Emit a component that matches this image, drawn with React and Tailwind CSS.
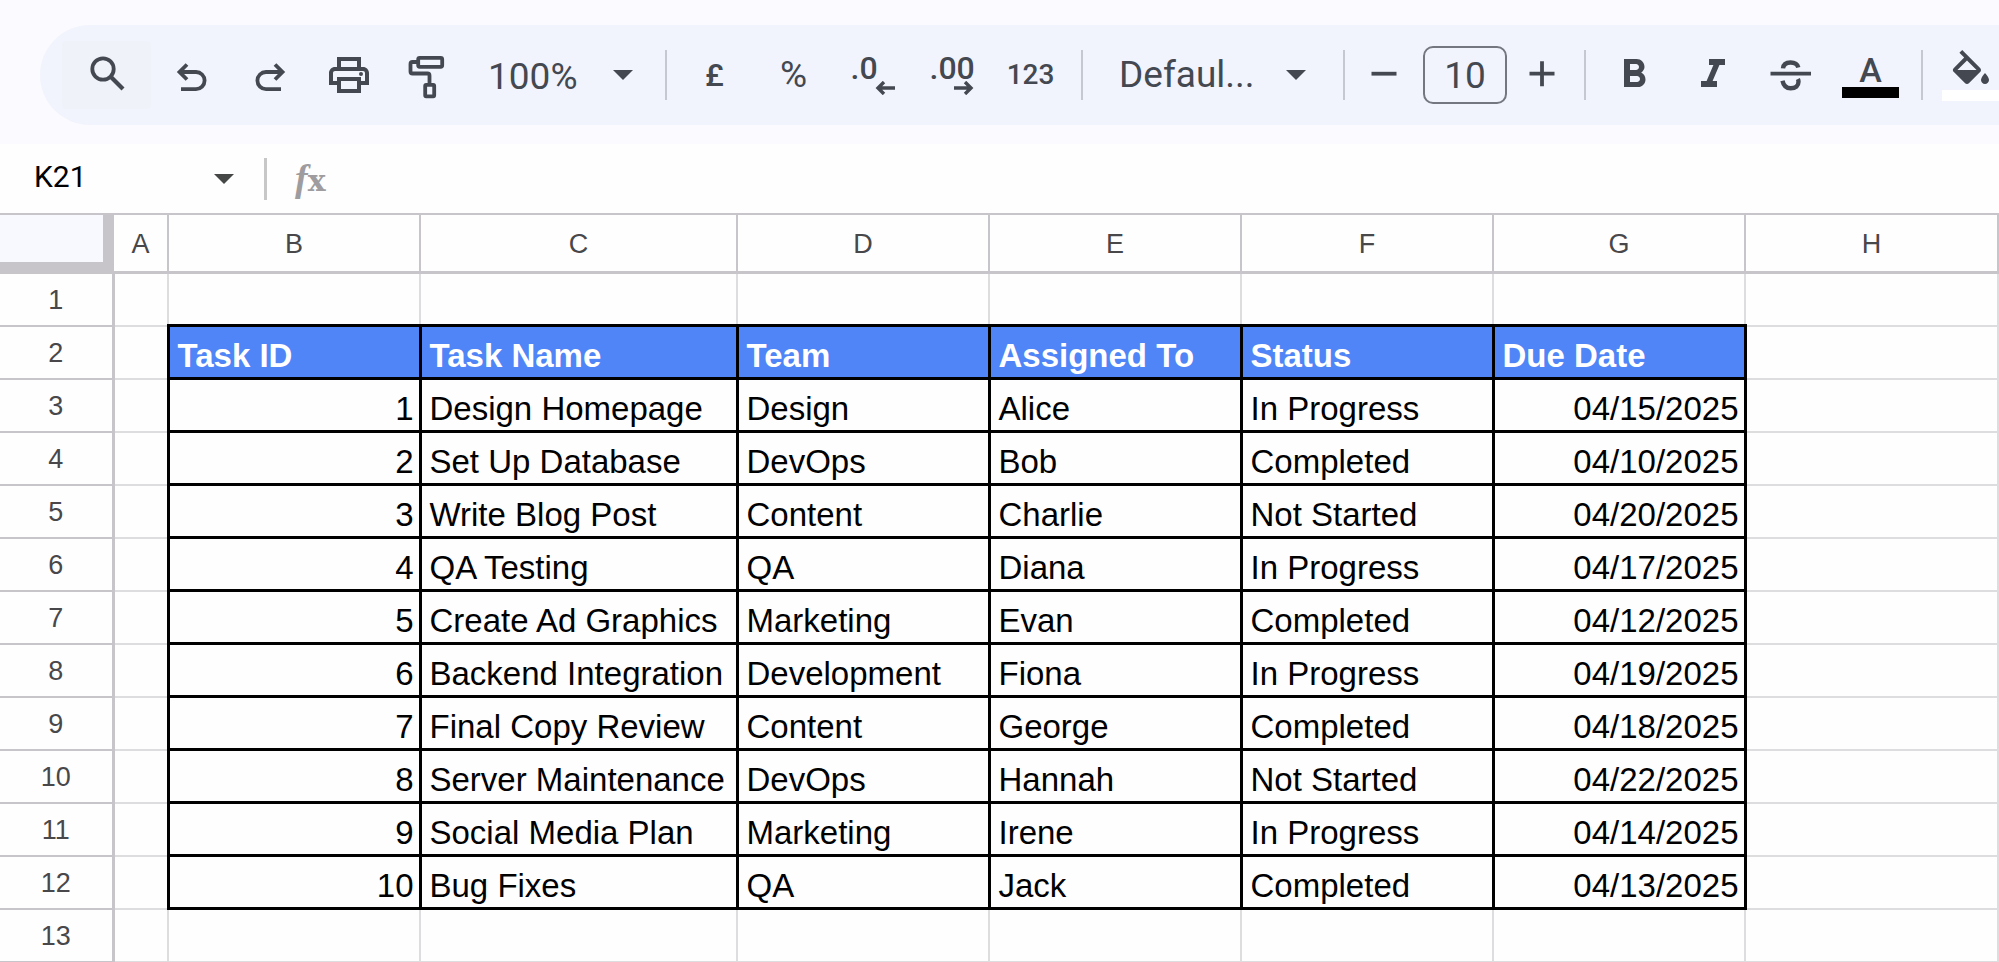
import { MdFormatBold, MdFormatColorFill, MdFormatItalic, MdOutlinePrint } from 'react-icons/md';

const columns = ['A', 'B', 'C', 'D', 'E', 'F', 'G', 'H'];

const headers = ['Task ID', 'Task Name', 'Team', 'Assigned To', 'Status', 'Due Date'];

const tasks = [
  [1, 'Design Homepage', 'Design', 'Alice', 'In Progress', '04/15/2025'],
  [2, 'Set Up Database', 'DevOps', 'Bob', 'Completed', '04/10/2025'],
  [3, 'Write Blog Post', 'Content', 'Charlie', 'Not Started', '04/20/2025'],
  [4, 'QA Testing', 'QA', 'Diana', 'In Progress', '04/17/2025'],
  [5, 'Create Ad Graphics', 'Marketing', 'Evan', 'Completed', '04/12/2025'],
  [6, 'Backend Integration', 'Development', 'Fiona', 'In Progress', '04/19/2025'],
  [7, 'Final Copy Review', 'Content', 'George', 'Completed', '04/18/2025'],
  [8, 'Server Maintenance', 'DevOps', 'Hannah', 'Not Started', '04/22/2025'],
  [9, 'Social Media Plan', 'Marketing', 'Irene', 'In Progress', '04/14/2025'],
  [10, 'Bug Fixes', 'QA', 'Jack', 'Completed', '04/13/2025'],
];

// sheet rows 1 to 13, the data starts in B2
const rows = [[], headers, ...tasks, []];

const Icon = ({ children }) => (
  <svg viewBox="0 0 48 48" className="size-12" fill="none" stroke="currentColor" strokeWidth="3.8" aria-hidden="true">
    {children}
  </svg>
);

const SearchIcon = () => (
  <Icon>
    <circle cx="20" cy="18" r="10.7" />
    <path d="M27.5 25.5 40 38" strokeWidth="4.2" />
  </Icon>
);

const UndoIcon = () => (
  <Icon>
    <path d="M20 13.5 12.5 21 20 28.5" />
    <path d="M12.5 21H29a8.6 8.6 0 0 1 0 17.2H14" />
  </Icon>
);

const RedoIcon = () => (
  <Icon>
    <path d="M29 13.5 36.5 21 29 28.5" />
    <path d="M36.5 21H20a8.6 8.6 0 0 0 0 17.2H35" />
  </Icon>
);

const PaintFormatIcon = () => (
  <Icon>
    <rect x="14.2" y="6.8" width="24" height="9" rx="1.5" />
    <path d="M14 11H8.5a2 2 0 0 0-2 2v7.5a2 2 0 0 0 2 2h15a2 2 0 0 1 2 2V33" />
    <rect x="21.2" y="33.8" width="9" height="11.5" rx="1" />
  </Icon>
);

const StrikethroughIcon = () => (
  <Icon>
    <path d="M2.5 22.7H43" />
    <path d="M15 17.4c.4-4 3.4-5.9 7.5-5.9s7 1.8 7.8 5" strokeWidth="4.4" />
    <path d="M14.5 29.8c1 4.9 4 7.5 8.2 7.5 5 0 7.8-2.6 7.8-6.6 0-1-.2-1.9-.6-2.7" strokeWidth="4.4" />
  </Icon>
);

const MinusIcon = () => (
  <Icon>
    <path d="M11.5 22.7h25" />
  </Icon>
);

const PlusIcon = () => (
  <Icon>
    <path d="M11.5 22.7h25M24 10.2v25" />
  </Icon>
);

const Arrow = ({ d }) => (
  <svg viewBox="0 0 20 14" className="h-[14px] w-5" fill="none" stroke="currentColor" strokeWidth="3.4" aria-hidden="true">
    <path d={d} />
  </svg>
);

const Caret = ({ className = '' }) => (
  <svg viewBox="0 0 20 10" className={`h-[10px] w-5 ${className}`} fill="currentColor" aria-hidden="true">
    <path d="M0 0h20L10 10z" />
  </svg>
);

const ToolButton = ({ label, children }) => (
  <button type="button" aria-label={label} className="flex h-[68px] w-[79px] shrink-0 items-center justify-center">
    {children}
  </button>
);

const Divider = () => <div className="mr-2 ml-[11px] h-[50px] w-[2px] shrink-0 bg-[#c5c8d0]" />;

const Toolbar = () => (
  <div className="overflow-hidden bg-[#fbfaff] pt-[25px] pb-[19px] pl-10">
    <div className="flex h-[100px] items-center rounded-l-full bg-[#f1f4fd] pl-[22px] font-[Roboto,sans-serif] text-[#444850]">
      <button
        type="button"
        aria-label="Search the menus"
        className="flex h-[68px] w-[89px] shrink-0 items-center justify-center rounded bg-[#eff2f9]"
      >
        <SearchIcon />
      </button>
      <ToolButton label="Undo"><UndoIcon /></ToolButton>
      <ToolButton label="Redo"><RedoIcon /></ToolButton>
      <ToolButton label="Print"><MdOutlinePrint className="size-12" /></ToolButton>
      <ToolButton label="Paint format"><PaintFormatIcon /></ToolButton>

      <div className="relative flex w-[187px] shrink-0 items-center">
        <select aria-label="Zoom" className="w-full appearance-none bg-transparent pt-[3px] pl-[21px] text-[37px]">
          <option>100%</option>
        </select>
        <Caret className="pointer-events-none absolute right-[21px]" />
      </div>
      <Divider />

      <ToolButton label="Format as currency"><span className="text-[32px] leading-9 font-medium">£</span></ToolButton>
      <ToolButton label="Format as percent"><span className="text-[37px] leading-9">%</span></ToolButton>
      <ToolButton label="Decrease decimal places">
        <span className="flex w-[44px] flex-col">
          <span className="text-left text-[32px] leading-[26px] font-medium">.0</span>
          <span className="flex justify-end"><Arrow d="M9 1 3 7l6 6M3 7h17" /></span>
        </span>
      </ToolButton>
      <ToolButton label="Increase decimal places">
        <span className="flex w-[44px] flex-col">
          <span className="text-left text-[32px] leading-[26px] font-medium">.00</span>
          <span className="flex justify-end"><Arrow d="M11 1l6 6-6 6M17 7H0" /></span>
        </span>
      </ToolButton>
      <ToolButton label="More formats"><span className="text-[28px] leading-9 font-medium">123</span></ToolButton>
      <Divider />

      <div className="relative flex w-[241px] shrink-0 items-center">
        <select aria-label="Font" className="w-full appearance-none bg-transparent pl-7 text-[37px]">
          <option>Defaul...</option>
        </select>
        <Caret className="pointer-events-none absolute right-[26px]" />
      </div>
      <Divider />

      <button type="button" aria-label="Decrease font size" className="flex h-[68px] w-[62px] shrink-0 items-center justify-center">
        <MinusIcon />
      </button>
      <input
        aria-label="Font size"
        defaultValue="10"
        className="mr-1 ml-2 h-[58px] w-[84px] shrink-0 rounded-[10px] border-2 border-[#74777f] bg-transparent text-center text-[37px]"
      />
      <button type="button" aria-label="Increase font size" className="flex h-[68px] w-[62px] shrink-0 items-center justify-center">
        <PlusIcon />
      </button>
      <Divider />

      <ToolButton label="Bold"><MdFormatBold className="size-12" /></ToolButton>
      <ToolButton label="Italic"><MdFormatItalic className="size-12" /></ToolButton>
      <ToolButton label="Strikethrough"><StrikethroughIcon /></ToolButton>
      <ToolButton label="Text color">
        <span className="flex flex-col items-center">
          <span className="text-[34px] leading-[34px] font-medium">A</span>
          <span className="h-[11px] w-[57px] bg-black" />
        </span>
      </ToolButton>
      <Divider />
      <ToolButton label="Fill color">
        <span className="flex flex-col items-center">
          <MdFormatColorFill className="-mb-2 size-12" />
          <span className="h-[11px] w-[57px] bg-white" />
        </span>
      </ToolButton>
    </div>
  </div>
);

const FormulaBar = () => (
  <div className="flex h-[71px] items-center border-b-2 border-[#c7c5c9] font-[Roboto,sans-serif]">
    <input aria-label="Name box" defaultValue="K21" className="w-[214px] shrink-0 bg-transparent pb-1 pl-[34px] text-3xl text-black" />
    <button type="button" aria-label="Named ranges" className="w-[50px] shrink-0 text-[#444746]">
      <Caret />
    </button>
    <div className="h-[42px] w-[3px] shrink-0 bg-[#c7c7c7]" />
    <label htmlFor="formula" className="flex items-baseline pl-7 leading-none text-[#9e9c9e]">
      <span className="font-['Liberation_Serif',serif] text-[38px] font-bold italic">f</span>
      <span className="font-['DejaVu_Serif',serif] text-3xl font-bold">x</span>
    </label>
    <input id="formula" className="ml-4 min-w-0 flex-1 bg-transparent text-3xl outline-none" />
  </div>
);

const Cell = ({ row, col, value }) => {
  const inTable = row >= 2 && row <= 12 && col >= 1 && col <= 6;
  // shared edges belong to the cell on their left or above
  const darkRight = row >= 2 && row <= 12 && col <= 6;
  const darkBottom = inTable || (row === 1 && col >= 1 && col <= 6);
  const isHeader = row === 2 && inTable;
  const alignRight = !isHeader && (col === 1 || col === 6);

  return (
    <td
      className={`overflow-hidden pr-[5px] pb-px pl-2 align-bottom text-[33px] leading-10 whitespace-nowrap ${
        darkRight ? 'border-r-3 border-r-black' : 'border-r-2 border-r-[#dddcde]'
      } ${darkBottom ? 'border-b-3 border-b-black' : 'border-b-2 border-b-[#dddcde]'} ${
        isHeader ? 'bg-[#4f85f6] font-bold text-white' : 'text-black'
      } ${alignRight ? 'text-right' : 'text-left'}`}
    >
      {value}
    </td>
  );
};

const Sheet = () => (
  <table className="w-full table-fixed border-collapse font-['Liberation_Sans',Arial,sans-serif]">
    <colgroup>
      <col className="w-[113px]" />
      <col className="w-[55px]" />
      <col className="w-[252px]" />
      <col className="w-[317px]" />
      <col className="w-[252px]" />
      <col className="w-[252px]" />
      <col className="w-[252px]" />
      <col className="w-[252px]" />
      <col />
    </colgroup>
    <thead>
      <tr className="h-[57px]">
        <td className="border-r-2 border-b-3 border-[#c7c5c9] p-0">
          <div className="h-[56px] border-r-[9px] border-b-[9px] border-[#c7c5c9] bg-[#f8f8ff]" />
        </td>
        {columns.map((name) => (
          <th key={name} scope="col" className="border-r-2 border-b-3 border-[#c7c5c9] p-0 pt-[2px] text-[27px] leading-8 font-normal text-[#48474a]">
            {name}
          </th>
        ))}
      </tr>
    </thead>
    <tbody>
      {rows.map((values, i) => (
        <tr key={i} className="h-[53px]">
          <th scope="row" className="border-r-3 border-b-2 border-[#c7c5c9] p-0 pt-[2px] text-[27px] leading-8 font-normal text-[#48474a]">
            {i + 1}
          </th>
          {columns.map((name, col) => (
            <Cell key={name} row={i + 1} col={col} value={values[col - 1]} />
          ))}
        </tr>
      ))}
    </tbody>
  </table>
);

export default function App() {
  return (
    <div className="min-h-screen bg-[#fefefe]">
      <Toolbar />
      <FormulaBar />
      <Sheet />
    </div>
  );
}
